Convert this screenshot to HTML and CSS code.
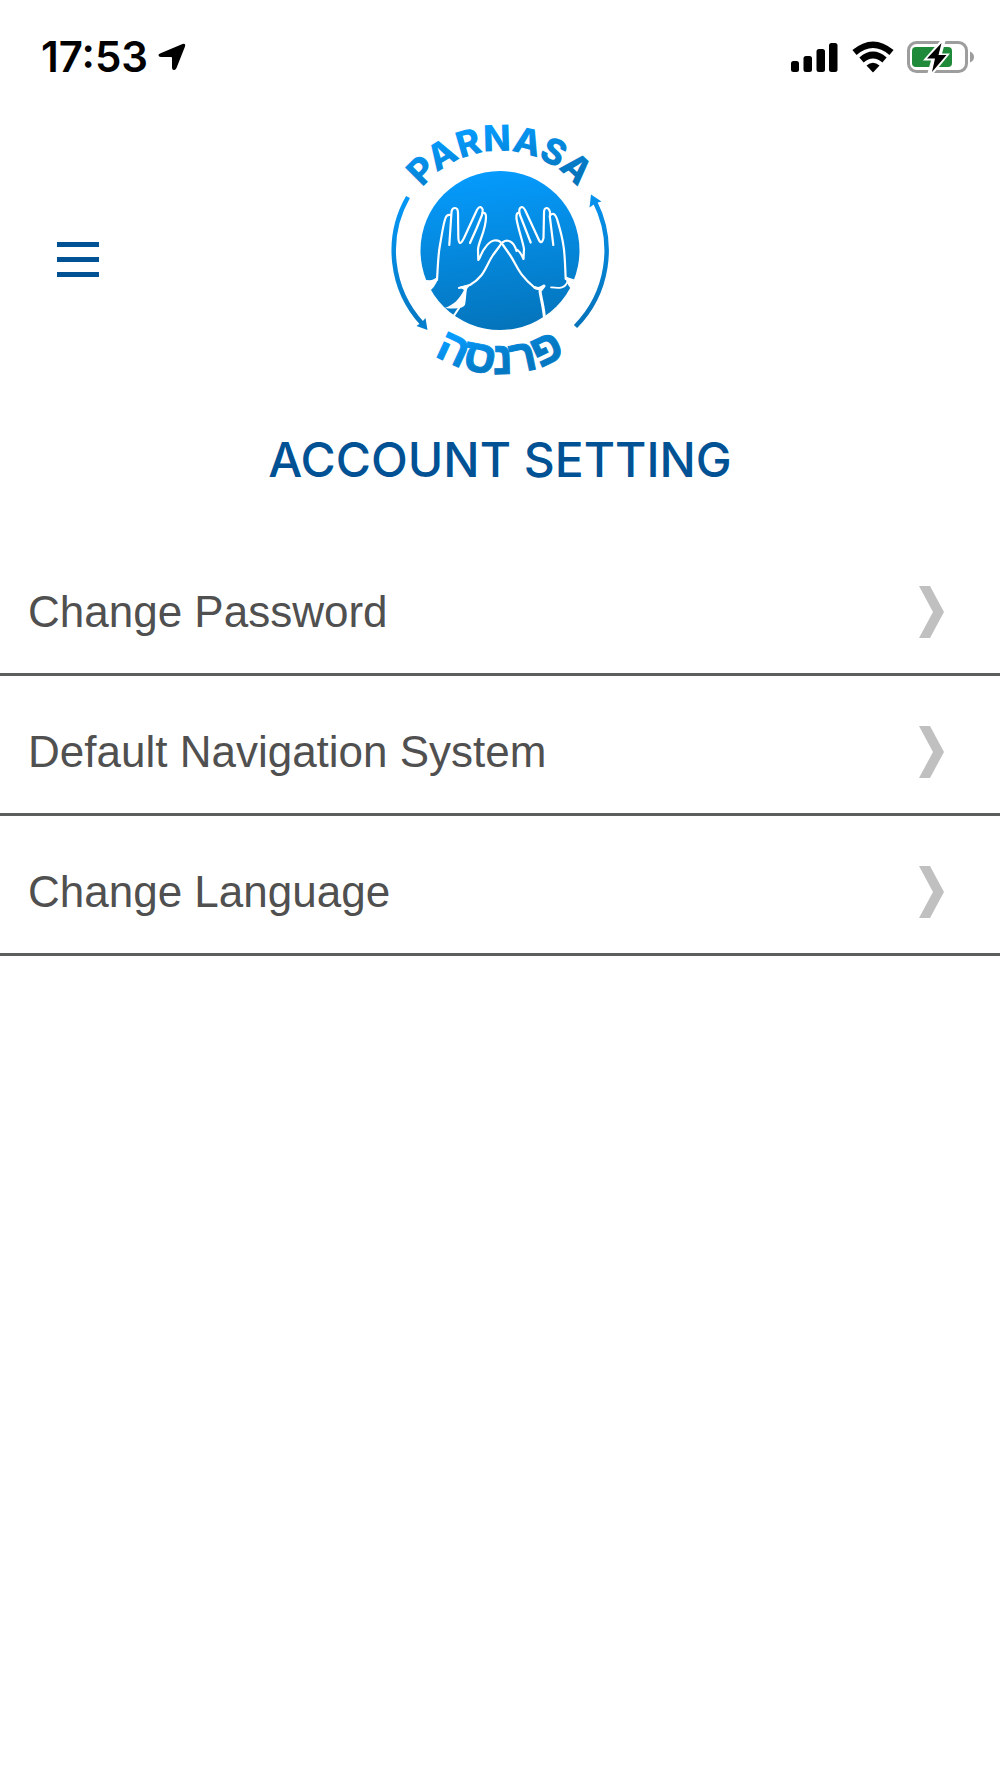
FILE: index.html
```html
<!DOCTYPE html>
<html lang="en">
<head>
    <meta charset="UTF-8">
    <meta name="viewport" content="width=device-width, initial-scale=1.0">
    <title>Account Setting</title>
    <link rel="stylesheet" href="styles.css">
</head>
<body>
    <div class="status-bar">
        <div class="status-left">
            <span class="time">17:53</span>
            <svg class="location" width="28" height="28" viewBox="0 0 28 28" aria-hidden="true">
                <path d="M2 10.500 L24.500 1 Q28 0 27 3.500 L18.500 25 Q17.500 27.500 15.500 27 Q14 26.500 14 24.500 V15 Q14 14 13 14 H3 Q0.500 14 0.500 12.300 Q0.500 11.200 2 10.500Z"/>
            </svg>
        </div>
        <div class="status-right">
            <svg width="48" height="32" viewBox="0 0 48 32" aria-hidden="true">
                <rect x="0" y="20" width="8" height="11" rx="2.500"/>
                <rect x="12.500" y="15" width="8.500" height="16" rx="2.500"/>
                <rect x="25.500" y="8" width="8.500" height="23" rx="2.500"/>
                <rect x="38" y="2" width="8.500" height="29" rx="2.500"/>
            </svg>
            <svg width="42" height="32" viewBox="0 0 42 32" aria-hidden="true">
                <path d="M2.500 11.500 Q21 -4 39.500 11.500" fill="none" stroke="#000" stroke-width="6.500"/>
                <path d="M9.500 19 Q21 9 32.500 19" fill="none" stroke="#000" stroke-width="6.500"/>
                <path d="M14.500 24.500 Q21 19 27.500 24.500 L21.500 31 Q21 31.500 20.500 31Z"/>
            </svg>
            <svg width="68" height="32" viewBox="0 0 68 32" aria-hidden="true">
                <rect x="1.500" y="1.500" width="58" height="29" rx="8" fill="none" stroke="#9d9d9d" stroke-width="3"/>
                <path d="M63 10.500 Q67 12 67 16 Q67 20 63 21.500Z" fill="#9d9d9d"/>
                <rect x="5" y="6" width="40" height="20" rx="4" fill="#1f8b3a"/>
                <path d="M33 0 L16 19.500 H24 L20.500 32 H27 L43 12.500 H35 L38.500 0Z" fill="#fff"/>
                <path d="M34.500 2 L20 17.500 H28 L25 31 L39.500 14 H31.500Z"/>
            </svg>
        </div>
    </div>

    <header class="header">
        <button class="menu-button" type="button" aria-label="Menu">
            <span class="menu-line"></span>
            <span class="menu-line"></span>
            <span class="menu-line"></span>
        </button>
        <svg class="logo" width="240" height="278" viewBox="0 10 240 278" role="img" aria-label="Parnasa">
            <defs>
                <linearGradient id="blue" gradientUnits="userSpaceOnUse" x1="110" y1="61" x2="130" y2="220">
                    <stop offset="0" stop-color="#059bfd"/>
                    <stop offset="1" stop-color="#0474bb"/>
                </linearGradient>
                <linearGradient id="blue-top" gradientUnits="userSpaceOnUse" x1="110" y1="15" x2="125" y2="82">
                    <stop offset="0" stop-color="#059bfd"/>
                    <stop offset="1" stop-color="#0474bb"/>
                </linearGradient>
                <linearGradient id="blue-bottom" gradientUnits="userSpaceOnUse" x1="80" y1="225" x2="95" y2="265">
                    <stop offset="0" stop-color="#059bfd"/>
                    <stop offset="1" stop-color="#0478c2"/>
                </linearGradient>
                <clipPath id="disc">
                    <circle cx="120" cy="140.500" r="80"/>
                </clipPath>
                <path id="top-arc" d="M20 141 A100 100 0 0 1 220 141"/>
                <path id="bottom-arc" d="M-4 140 A124 124 0 0 0 244 140"/>
            </defs>

            <text class="logo-latin" fill="url(#blue-top)"><textPath href="#top-arc" startOffset="50%">PARNASA</textPath></text>
            <text class="logo-hebrew" lang="he" fill="url(#blue-bottom)" stroke="url(#blue-bottom)"><textPath href="#bottom-arc" startOffset="50%">פרנסה</textPath></text>

            <!-- arrows round the disc -->
            <g fill="none" stroke="url(#blue)" stroke-width="4.500">
                <path d="M28 87 A108 108 0 0 0 42.500 214"/>
                <path d="M195.500 216.500 A108 108 0 0 0 215 92"/>
            </g>
            <path d="M47.500 220 L45.500 208 L42 212 L36.500 216Z" fill="#047fce"/>
            <path d="M211 84.500 L221.500 91.500 L216 93 L209.500 97.500Z" fill="#0491ec"/>

            <circle cx="120" cy="140.500" r="79.500" fill="url(#blue)"/>

            <!-- hands -->
            <g clip-path="url(#disc)">
                <g fill="none" stroke="#fff" stroke-width="2.200" stroke-linecap="round" stroke-linejoin="round">
                    <path d="M57 170 C58 155 58 145 60 135 C62 124 63 115 65.500 108 Q67 104 70.500 105"/>
                    <path d="M69.300 135 L71.500 102 Q72 98 75 98 Q78 98 78 103 L78.300 125 C78.300 135 80.500 135 84 128 L96 102 Q98 97 100.500 97 Q104 98 102 105 Q97 118 90 133"/>
                    <path d="M102.500 103 Q106 102 106 107 C106 121 98 132 98 140 L98.300 150 C101 147 101 142 105 138 C110 130 118 127 123 135 L130 145 C137 155 137 163 155 178"/>
                    <path d="M185.700 169 C185 155 185 145 183.500 136 C182 125 179 116 177 109 Q175 103 172 104 Q169 105 170 108 L173.300 135"/>
                    <path d="M170 106 V102 Q169 98 166.500 98 Q164 98 164 103 L163.500 128 C162 134 160 133 158 128 L146 102 Q144 97 141.500 97 Q138 98 140 105 L150.700 132.500"/>
                    <path d="M139 103 Q136 102 136.500 109 C139 122 143 132 144 139 L143.500 149 C142 145 140 142 137.500 140 L136.500 141 L135.500 138 C132 129 124 128 119 137 L113 145 C105 157 105 166 90 175 L79 178"/>
                    <path d="M155 177.500 Q159 180 164 176 L160 181 C161 189 164 198 164.500 209" stroke-width="3"/>
                    <path d="M188 170 C186 180 176 178 171 177.300" stroke-width="1.700"/>
                    <path d="M79 198 L73 207"/>
                </g>
                <path d="M79 177 L91 174 L87 179 C86 185 86 190 85 195 Q82 200 65 198 C73 195 79 190 84 180Z" fill="#fff"/>
                <path d="M38 173 L47 170 Q54 171 58 166 Q58 173 51 180 L42 184Z" fill="#fff"/>
                <path d="M185 166 Q189 168 193 169 L202 172 L191 179 Q186 173 185 166Z" fill="#fff"/>
            </g>
        </svg>
    </header>

    <main>
        <h1 class="title">ACCOUNT SETTING</h1>
        <ul class="settings">
            <li>
                <a class="settings-link" href="#">
                    <span>Change Password</span>
                    <svg width="25" height="52" viewBox="0 0 25 52" aria-hidden="true"><path d="M0 0 H11 L25 26 L11 52 H0 L14 26Z"/></svg>
                </a>
            </li>
            <li>
                <a class="settings-link" href="#">
                    <span>Default Navigation System</span>
                    <svg width="25" height="52" viewBox="0 0 25 52" aria-hidden="true"><path d="M0 0 H11 L25 26 L11 52 H0 L14 26Z"/></svg>
                </a>
            </li>
            <li>
                <a class="settings-link" href="#">
                    <span>Change Language</span>
                    <svg width="25" height="52" viewBox="0 0 25 52" aria-hidden="true"><path d="M0 0 H11 L25 26 L11 52 H0 L14 26Z"/></svg>
                </a>
            </li>
        </ul>
    </main>
</body>
</html>
```
FILE: styles.css
```css
* {
    box-sizing: border-box;
}
body {
    margin: 0;
    background-color: #fff;
    font-family: "Liberation Sans", Arial, sans-serif;
    color: #505050;
}
.status-bar {
    display: flex;
    justify-content: space-between;
    align-items: center;
    height: 120px;
    padding: 0 25px 6px 41px;
    color: #000;
}
.status-left {
    display: flex;
    align-items: center;
    gap: 10px;
}
.status-right {
    display: flex;
    align-items: center;
    gap: 13px;
}
.time {
    font-family: Inter, sans-serif;
    font-size: 42px;
    font-weight: 600;
    line-height: 48px;
}
.header {
    display: grid;
    grid-template-columns: 1fr auto 1fr;
    align-items: center;
}
.menu-button {
    display: flex;
    flex-direction: column;
    gap: 10px;
    justify-self: start;
    margin-left: 47px;
    padding: 10px;
    border: none;
    background: none;
    cursor: pointer;
}
.menu-line {
    width: 42px;
    height: 5px;
    background-color: #005295;
}
.logo {
    display: block;
    overflow: visible;
}
.logo-latin {
    font-family: Inter, sans-serif;
    font-size: 36px;
    font-weight: 800;
    text-anchor: middle;
}
.logo-hebrew {
    font-family: "Liberation Sans", sans-serif;
    font-size: 46px;
    font-weight: 700;
    text-anchor: middle;
}
.title {
    margin: 33px 0 47px;
    font-family: Inter, sans-serif;
    font-size: 48px;
    font-weight: 500;
    line-height: 58px;
    text-align: center;
    color: #005295;
}
.settings {
    margin: 0;
    padding: 0;
    list-style: none;
}
.settings-link {
    display: flex;
    justify-content: space-between;
    align-items: center;
    padding: 50px 56px 35px 28px;
    border-bottom: 3px solid #5c5e5d;
    font-size: 44px;
    line-height: 52px;
    color: #505050;
    text-decoration: none;
}
.settings-link svg {
    flex: none;
    fill: #c0c0c0;
}
```
